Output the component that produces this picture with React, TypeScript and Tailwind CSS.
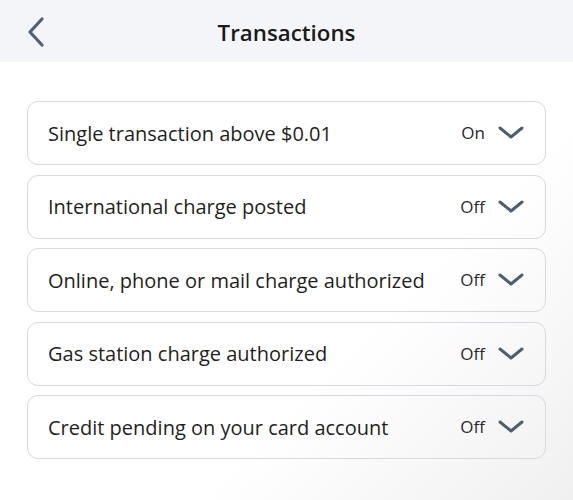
const rows = [
  { label: "Single transaction above $0.01", state: "On" },
  { label: "International charge posted", state: "Off" },
  { label: "Online, phone or mail charge authorized", state: "Off" },
  { label: "Gas station charge authorized", state: "Off" },
  { label: "Credit pending on your card account", state: "Off" },
]

function ChevronDown() {
  return (
    <svg width="26" height="14" viewBox="0 0 26 14" fill="none">
      <path d="M2 2 L13 11 L24 2" stroke="#4c5f70" strokeWidth="3" strokeLinecap="round" strokeLinejoin="round" />
    </svg>
  )
}

export default function App() {
  return (
    <main
      className="h-[500px] w-[573px] overflow-hidden bg-[linear-gradient(135deg,#ffffff_65%,#f0f0f1_100%)] font-['Open_Sans',sans-serif] text-[#1c1c1e]"
    >
      <header className="relative flex h-[62px] items-center justify-center bg-[#f4f5f8] pt-[3px]">
        <svg className="absolute left-[26px] top-[16px]" width="20" height="32" viewBox="0 0 20 32" fill="none">
          <path d="M16 3 L4 16 L16 29" stroke="#4f6272" strokeWidth="3.2" strokeLinecap="round" strokeLinejoin="round" />
        </svg>
        <h1 className="text-[22.3px] font-semibold text-[#1a1a1c]">Transactions</h1>
      </header>

      <section className="flex flex-col gap-[9.5px] px-[27px] pt-[39px]">
        {rows.map((row) => (
          <div
            key={row.label}
            className="flex h-[64px] items-center justify-between rounded-[11px] border border-[#d6d9de] pl-[20px] pr-[21px]"
          >
            <span className="pt-[1px] text-[20px] text-[#1f1f21]">{row.label}</span>
            <div className="flex items-center gap-[13px]">
              <span className="text-[17px] text-[#2a2a2c]">{row.state}</span>
              <ChevronDown />
            </div>
          </div>
        ))}
      </section>
    </main>
  )
}
